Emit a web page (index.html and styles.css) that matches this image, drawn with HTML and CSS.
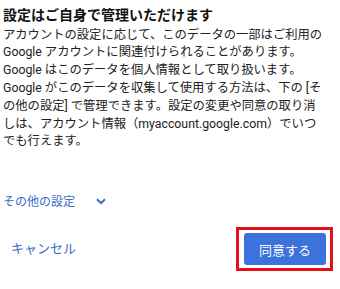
FILE: index.html
```html
<!DOCTYPE html>
<html lang="ja">
<head>
<meta charset="utf-8">
<link rel="stylesheet" href="styles.css">
</head>
<body>
<div class="page">
  <h1 class="title">設定はご自身で管理いただけます</h1>
  <p class="body">アカウントの設定に応じて、このデータの一部はご利用の<br>Google アカウントに関連付けられることがあります。<br>Google はこのデータを個人情報として取り扱います。<br>Google がこのデータを収集して使用する方法は、下の [そ<br>の他の設定] で管理できます。設定の変更や同意の取り消<br>しは、アカウント情報（myaccount.google.com）でいつ<br>でも行えます。</p>
  <div class="more">
    <span>その他の設定</span>
    <svg class="chev" width="10" height="7" viewBox="0 0 10 7"><path d="M1 1.2 L5 5 L9 1.2" fill="none" stroke="#3d6bc4" stroke-width="2"/></svg>
  </div>
  <div class="actions">
    <span class="cancel">キャンセル</span>
    <div class="highlight"><div class="agree">同意する</div></div>
  </div>
</div>
</body>
</html>
```
FILE: styles.css
```css
html, body { margin: 0; padding: 0; background: #fff; }
body { font-family: Roboto, "Noto Sans CJK JP", sans-serif; color: #202124; }
.page { width: 340px; height: 289px; padding: 6px 0 0 3px; box-sizing: border-box; display: flex; flex-direction: column; }
.title { margin: 0; font-size: 14px; line-height: 18px; font-weight: 700; color: #111; }
.body { margin: 2.6px 0 0; font-size: 12.3px; line-height: 17.8px; white-space: nowrap; color: #222; }
.more { margin-top: 40px; display: flex; align-items: center; height: 18px; font-size: 12px; color: #3d6bc4; }
.chev { margin-left: 21px; margin-top: 2px; }
.actions { margin-top: 18px; display: flex; align-items: center; justify-content: space-between; padding: 0 7px 0 8px; }
.cancel { font-size: 13px; color: #3d6bc4; margin-top: -3px; }
.highlight { border: 3px solid #e3101c; padding: 3px 4px 3px 5px; width: 82px; height: 32px; }
.agree { width: 82px; height: 32px; background: #3b72dc; border-radius: 3px; color: #fff; font-size: 13px; display: flex; align-items: center; justify-content: center; }
```
